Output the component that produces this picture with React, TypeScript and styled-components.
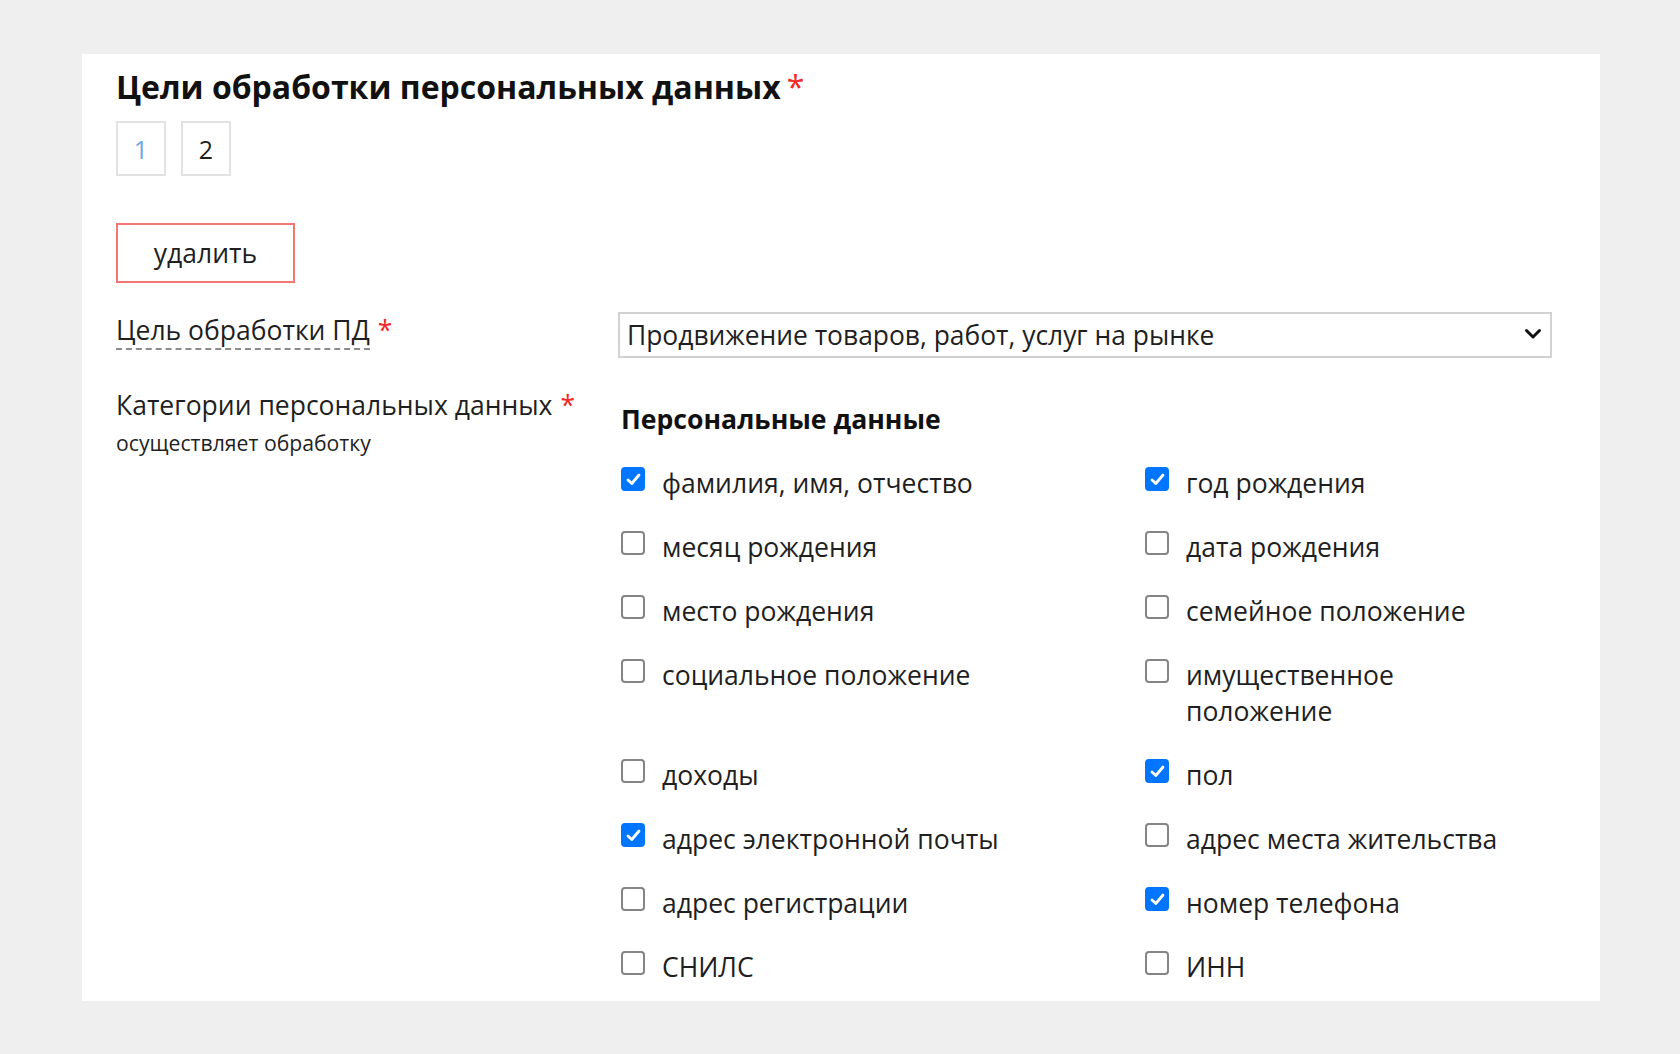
import React from "react";
import styled, { createGlobalStyle } from "styled-components";

const Global = createGlobalStyle`
  html, body { margin: 0; padding: 0; background: #efefef; }
  body { font-family: "Open Sans", "Noto Sans", sans-serif; color: #1f1f1f; }
  * { box-sizing: border-box; }
`;

const Page = styled.div`
  padding: 54px 80px 54px 82px;
`;

const Card = styled.div`
  background: #ffffff;
  padding: 13px 48px 16px 34px;
`;

const Title = styled.h2`
  margin: 0;
  font-size: 32px;
  line-height: 39px;
  font-weight: 700;
  color: #111;
`;

const Req = styled.span<{ $gap?: number }>`
  color: #f02828;
  font-weight: 400;
  margin-left: ${(p) => p.$gap ?? 8}px;
`;

const Tabs = styled.div`
  display: flex;
  gap: 15px;
  margin-top: 15px;
`;

const Tab = styled.div<{ $active?: boolean }>`
  width: 50px;
  height: 55px;
  border: 2px solid #e2e2e2;
  display: flex;
  align-items: center;
  justify-content: center;
  font-size: 25px;
  color: ${(p) => (p.$active ? "#6aa8e6" : "#1f1f1f")};
`;

const DeleteButton = styled.button`
  display: block;
  margin-top: 47px;
  width: 179px;
  height: 60px;
  background: #fff;
  border: 2px solid #f57474;
  font-family: inherit;
  font-size: 26.5px;
  color: #1f1f1f;
  padding: 0;
  cursor: pointer;
`;

const FormRow = styled.div<{ $mt: number }>`
  display: grid;
  grid-template-columns: 502px 1fr;
  align-items: start;
  margin-top: ${(p) => p.$mt}px;
`;

const Label = styled.div`
  font-size: 26.5px;
  line-height: 36px;
  color: #1f1f1f;
`;

const Dashed = styled.span`
  border-bottom: 2px dashed #8c8c8c;
`;

const Hint = styled.div`
  font-size: 21.2px;
  line-height: 28px;
  margin-top: 6px;
  color: #1f1f1f;
`;

const SelectWrap = styled.div`
  position: relative;
  height: 46px;
`;

const Select = styled.select`
  appearance: none;
  -webkit-appearance: none;
  width: 100%;
  height: 46px;
  border: 2px solid #d2d2d2;
  border-radius: 0;
  background: #fff;
  font-family: inherit;
  font-size: 26.4px;
  color: #1f1f1f;
  padding: 0 40px 0 7px;
  outline: none;
`;

const Chevron = styled.svg`
  position: absolute;
  right: 10px;
  top: 15px;
  pointer-events: none;
`;

const GroupTitle = styled.div`
  margin-top: 14px;
  margin-left: 3px;
  font-size: 26.6px;
  line-height: 36px;
  font-weight: 700;
  color: #111;
`;

const CheckGrid = styled.div`
  display: grid;
  grid-template-columns: 524px 1fr;
  row-gap: 28px;
  margin: 28px 0 0 3px;
`;

const CheckItem = styled.label`
  display: flex;
  align-items: flex-start;
  gap: 17px;
  font-size: 26.5px;
  line-height: 36px;
  color: #1f1f1f;
`;

const Box = styled.span<{ $checked?: boolean }>`
  flex: none;
  width: 24px;
  height: 24px;
  margin-top: 2px;
  border-radius: 4px;
  display: flex;
  align-items: center;
  justify-content: center;
  background: ${(p) => (p.$checked ? "#0075ff" : "#fff")};
  border: 2px solid ${(p) => (p.$checked ? "#0075ff" : "#858585")};
`;

const ItemText = styled.span`
  max-width: 345px;
`;

const items: [string, boolean][] = [
  ["фамилия, имя, отчество", true],
  ["год рождения", true],
  ["месяц рождения", false],
  ["дата рождения", false],
  ["место рождения", false],
  ["семейное положение", false],
  ["социальное положение", false],
  ["имущественное положение", false],
  ["доходы", false],
  ["пол", true],
  ["адрес электронной почты", true],
  ["адрес места жительства", false],
  ["адрес регистрации", false],
  ["номер телефона", true],
  ["СНИЛС", false],
  ["ИНН", false],
];

function Check({ checked }: { checked: boolean }) {
  return (
    <Box $checked={checked}>
      {checked && (
        <svg width="15" height="13" viewBox="0 0 15 13">
          <path d="M2 7 L5.8 10.5 L13 2" fill="none" stroke="#fff" strokeWidth="2.8" strokeLinecap="round" strokeLinejoin="round" />
        </svg>
      )}
    </Box>
  );
}

export default function App() {
  return (
    <>
      <Global />
      <Page>
        <Card>
          <Title>
            Цели обработки персональных данных<Req $gap={6}>*</Req>
          </Title>
          <Tabs>
            <Tab $active>1</Tab>
            <Tab>2</Tab>
          </Tabs>
          <DeleteButton>удалить</DeleteButton>
          <FormRow $mt={29}>
            <Label>
              <Dashed>Цель обработки ПД</Dashed>
              <Req>*</Req>
            </Label>
            <SelectWrap>
              <Select defaultValue="promo">
                <option value="promo">Продвижение товаров, работ, услуг на рынке</option>
              </Select>
              <Chevron width="18" height="14" viewBox="0 0 18 14">
                <path d="M2.5 3.5 L9 10 L15.5 3.5" fill="none" stroke="#111" strokeWidth="3" strokeLinecap="round" strokeLinejoin="round" />
              </Chevron>
            </SelectWrap>
          </FormRow>
          <FormRow $mt={29}>
            <div>
              <Label>
                Категории персональных данных<Req>*</Req>
              </Label>
              <Hint>осуществляет обработку</Hint>
            </div>
            <div>
              <GroupTitle>Персональные данные</GroupTitle>
              <CheckGrid>
                {items.map(([t, c]) => (
                  <CheckItem key={t}>
                    <Check checked={c} />
                    <ItemText>{t}</ItemText>
                  </CheckItem>
                ))}
              </CheckGrid>
            </div>
          </FormRow>
        </Card>
      </Page>
    </>
  );
}
